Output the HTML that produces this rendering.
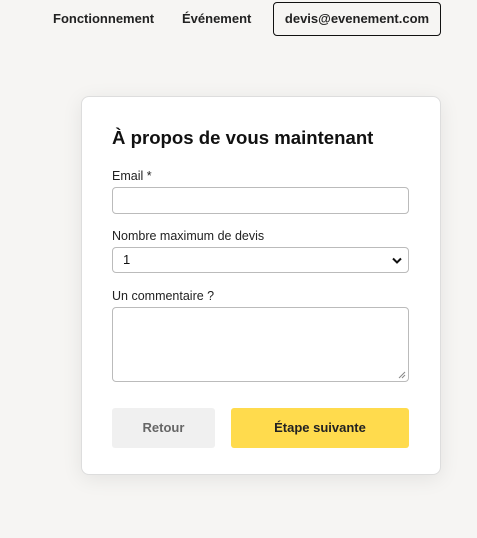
<!DOCTYPE html>
<html><head><meta charset="utf-8"><style>
*{box-sizing:border-box;margin:0;padding:0}
body{width:477px;height:538px;background:#f6f5f3;font-family:"Liberation Sans",sans-serif;position:relative;overflow:hidden;color:#111}
.nav{position:absolute;top:11px;font-size:13px;font-weight:bold;color:#222}
.btnmail{position:absolute;left:273px;top:2px;width:168px;height:34px;border:1.5px solid #111;border-radius:4px;font-size:13px;font-weight:bold;text-align:center;line-height:31px;color:#222}
.card{position:absolute;left:81px;top:96px;width:360px;height:379px;background:#fff;border:1px solid #ddd;border-radius:8px;box-shadow:0 4px 20px rgba(0,0,0,.08)}
h1{position:absolute;left:30px;top:30px;font-size:18.6px;font-weight:bold;color:#111}
.lbl{position:absolute;left:30px;font-size:12.5px;color:#222}
.in{position:absolute;left:30px;width:297px;border:1px solid #bbb;border-radius:4px;background:#fff}
.b{position:absolute;top:311px;height:40px;border-radius:3px;font-size:13px;font-weight:bold;text-align:center;line-height:40px}
</style></head><body>
<div class="nav" style="left:53px">Fonctionnement</div>
<div class="nav" style="left:182px">Événement</div>
<div class="btnmail">devis@evenement.com</div>
<div class="card">
<h1>À propos de vous maintenant</h1>
<div class="lbl" style="top:72px">Email *</div>
<div class="in" style="top:90px;height:27px"></div>
<div class="lbl" style="top:132px">Nombre maximum de devis</div>
<div class="in" style="top:150px;height:26px;font-size:13px;padding-left:10px;line-height:24px">1
<svg style="position:absolute;right:6px;top:9px" width="10" height="7" viewBox="0 0 10 7"><path d="M1 1.5L5 5.5L9 1.5" stroke="#111" stroke-width="2" fill="none"/></svg></div>
<div class="lbl" style="top:192px">Un commentaire ?</div>
<div class="in" style="top:210px;height:75px"><svg style="position:absolute;right:2px;bottom:2px" width="8" height="8"><path d="M1 7L7 1M4 7L7 4" stroke="#888" stroke-width="1"/></svg></div>
<div class="b" style="left:30px;width:103px;background:#f0f0f0;color:#666">Retour</div>
<div class="b" style="left:149px;width:178px;background:#ffdb4d;color:#222">Étape suivante</div>
</div>
</body></html>
